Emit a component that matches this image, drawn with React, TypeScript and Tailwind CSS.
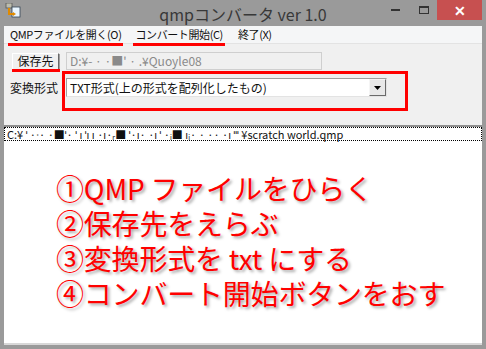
import React from "react";

const ui = { fontFamily: '"Noto Sans CJK JP", "Noto Sans", sans-serif' };

function AppIcon() {
  return (
    <svg width="16" height="16" viewBox="0 0 16 16">
      <rect x="1" y="0" width="6" height="5" fill="#bdbdae" stroke="#555" strokeWidth="0.8" />
      <rect x="7" y="4" width="8" height="10" fill="#eaf6ff" stroke="#345" strokeWidth="0.8" />
      <path d="M4 5 V11 H9" fill="none" stroke="#e08a00" strokeWidth="2" />
      <path d="M8 9 L11 11 L8 13 Z" fill="#e08a00" />
    </svg>
  );
}

export default function App() {
  return (
    <div className="w-[486px] h-[349px] bg-[#9a9a9a] flex flex-col overflow-hidden" style={ui}>
      {/* title bar */}
      <div className="h-[26px] shrink-0 relative flex items-center">
        <div className="absolute left-[5px] top-[3px]">
          <AppIcon />
        </div>
        <div className="flex-1 text-center text-[16px] text-[#383838] leading-none pt-[2px]">
          qmpコンバータ ver 1.0
        </div>
        <div className="absolute right-[4px] top-0 flex items-start">
          <div className="w-[30px] h-[20px] flex items-center justify-center">
            <div className="w-[9px] h-[2px] bg-[#333]" />
          </div>
          <div className="w-[27px] h-[20px] flex items-center justify-center">
            <div className="w-[10px] h-[8px] border border-[#333] border-t-2" />
          </div>
          <div className="w-[45px] h-[20px] bg-[#c75050] flex items-center justify-center text-white text-[14px] font-bold leading-none">
            ✕
          </div>
        </div>
      </div>

      {/* client */}
      <div className="flex-1 mx-[4px] mb-[4px] flex flex-col bg-[#f0f0f0] relative">
        {/* menu */}
        <div className="h-[18px] bg-[#f5f6f7] border-b border-[#e3e3e3] flex items-center text-[11px] text-[#111] leading-none tracking-[-0.4px]">
          <span className="ml-[6px] relative">
            QMPファイルを開く(O)
            <span className="absolute left-[-2px] right-[-2px] top-[14px] h-[3px] bg-[#f00]" />
          </span>
          <span className="ml-[14px] relative">
            コンバート開始(C)
            <span className="absolute left-[-2px] right-[-2px] top-[14px] h-[3px] bg-[#f00]" />
          </span>
          <span className="ml-[15px]">終了(X)</span>
        </div>

        {/* form */}
        <div className="h-[81px] relative text-[12px] leading-none">
          <div className="flex items-center pt-[8px] pl-[8px]">
            <div className="relative">
              <div className="w-[47px] h-[17px] bg-[#f0f0f0] border border-t-white border-l-white border-r-[#696969] border-b-[#696969] shadow-[1px_1px_0_#a0a0a0] flex items-center justify-center text-[#111]">
                保存先
              </div>
              <div className="absolute left-0 right-[-1px] top-[16px] h-[3px] bg-[#f00]" />
            </div>
            <div className="ml-[7px] w-[256px] h-[18px] border border-[#cfcfcf] bg-[#f0f0f0] flex items-center pl-[3px] text-[#8a8a8a]">
              D:¥- · ·■' · .¥Quoyle08
            </div>
          </div>
          <div className="flex items-center pt-[8px] pl-[6px]">
            <span className="text-[#111] w-[50px]">変換形式</span>
            <div className="ml-[6px] w-[321px] h-[19px] border border-t-[#a0a0a0] border-l-[#a0a0a0] border-r-[#e3e3e3] border-b-[#e3e3e3] bg-white flex items-center">
              <span className="flex-1 pl-[3px] text-[#111]">TXT形式(上の形式を配列化したもの)</span>
              <div className="w-[17px] h-[17px] bg-[#e8e8e8] border border-t-[#f5f5f5] border-l-[#f5f5f5] border-r-[#6a6a6a] border-b-[#6a6a6a] flex items-center justify-center">
                <svg width="7" height="4" viewBox="0 0 7 4">
                  <path d="M0 0 H7 L3.5 4 Z" fill="#000" />
                </svg>
              </div>
            </div>
          </div>
          {/* annotation box */}
          <div className="absolute left-[58px] top-[27px] w-[346px] h-[40px] border-[3px] border-[#f00]" />
        </div>

        {/* separator */}
        <div className="h-[2px] bg-[#8f8f8f]" />

        {/* output area */}
        <div className="flex-1 bg-white border-b-2 border-[#d8d8d8] flex flex-col">
          <div className="h-[14px] border border-dotted border-black flex items-center pl-[2px] text-[11px] leading-[12px] text-[#111] whitespace-nowrap">
            C:¥ ˈ ·ᐧ· ·■ˈ· ˈ ı ˈı ı ·ı·ᵣ■ ˈ·ı· ·ı ˈ ·ᵢ■ ıᵢ· ·  ·· ·ı ˈˈˈ ¥scratch world.qmp
          </div>
          <div
            className="pl-[52px] pt-[30px] text-[28px] leading-[35px] text-[#f00] tracking-[-0.2px]"
            style={{ ...ui, textShadow: "2px 2px 3px rgba(0,0,0,0.35)" }}
          >
            <div>①QMP ファイルをひらく</div>
            <div>②保存先をえらぶ</div>
            <div>③変換形式を txt にする</div>
            <div>④コンバート開始ボタンをおす</div>
          </div>
        </div>
      </div>
    </div>
  );
}
